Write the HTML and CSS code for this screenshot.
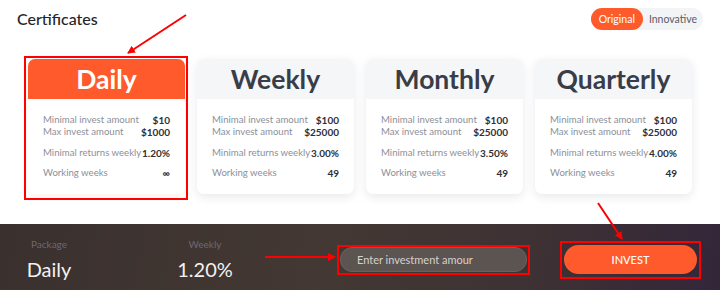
FILE: index.html
```html
<!DOCTYPE html>
<html>
<head>
<meta charset="utf-8">
<link rel="stylesheet" href="styles.css">
</head>
<body>
<div class="page">
  <div class="top">
    <h1 class="title">Certificates</h1>
    <div class="toggle">
      <span class="tab active">Original</span>
      <span class="tab">Innovative</span>
    </div>
  </div>
  <div class="cards">
    <div class="card selected">
      <div class="card-head">Daily</div>
      <div class="card-body">
        <div class="row"><span>Minimal invest amount</span><b>$10</b></div>
        <div class="row"><span>Max invest amount</span><b>$1000</b></div>
        <div class="row gap"><span>Minimal returns weekly</span><b>1.20%</b></div>
        <div class="row gap"><span>Working weeks</span><b>∞</b></div>
      </div>
    </div>
    <div class="card">
      <div class="card-head">Weekly</div>
      <div class="card-body">
        <div class="row"><span>Minimal invest amount</span><b>$100</b></div>
        <div class="row"><span>Max invest amount</span><b>$25000</b></div>
        <div class="row gap"><span>Minimal returns weekly</span><b>3.00%</b></div>
        <div class="row gap"><span>Working weeks</span><b>49</b></div>
      </div>
    </div>
    <div class="card">
      <div class="card-head">Monthly</div>
      <div class="card-body">
        <div class="row"><span>Minimal invest amount</span><b>$100</b></div>
        <div class="row"><span>Max invest amount</span><b>$25000</b></div>
        <div class="row gap"><span>Minimal returns weekly</span><b>3.50%</b></div>
        <div class="row gap"><span>Working weeks</span><b>49</b></div>
      </div>
    </div>
    <div class="card">
      <div class="card-head">Quarterly</div>
      <div class="card-body">
        <div class="row"><span>Minimal invest amount</span><b>$100</b></div>
        <div class="row"><span>Max invest amount</span><b>$25000</b></div>
        <div class="row gap"><span>Minimal returns weekly</span><b>4.00%</b></div>
        <div class="row gap"><span>Working weeks</span><b>49</b></div>
      </div>
    </div>
  </div>
  <div class="bar">
    <div class="stat stat-pkg">
      <div class="stat-label">Package</div>
      <div class="stat-value">Daily</div>
    </div>
    <div class="stat stat-week">
      <div class="stat-label">Weekly</div>
      <div class="stat-value">1.20%</div>
    </div>
    <input class="amount" type="text" placeholder="Enter investment amour">
    <button class="invest">INVEST</button>
  </div>
  <svg class="annot" width="720" height="290" viewBox="0 0 720 290">
    <defs>
      <marker id="ah" markerWidth="8" markerHeight="8" refX="7" refY="4" orient="auto" markerUnits="userSpaceOnUse">
        <path d="M0,0 L8,4 L0,8 Z" fill="#ff0000"/>
      </marker>
    </defs>
    <g fill="none" stroke="#ff0000" stroke-width="2">
      <rect x="25" y="57" width="162" height="142"/>
      <rect x="338" y="246" width="191" height="28"/>
      <rect x="561" y="242" width="139" height="36"/>
      <line x1="186" y1="15" x2="128" y2="53" marker-end="url(#ah)"/>
      <line x1="265" y1="257" x2="335" y2="257" marker-end="url(#ah)"/>
      <line x1="598" y1="203" x2="622" y2="239" marker-end="url(#ah)"/>
    </g>
  </svg>
</div>
</body>
</html>
```
FILE: styles.css
```css
* { box-sizing: border-box; }
html, body { margin: 0; padding: 0; background: #fff; }
body {
  width: 720px;
  height: 290px;
  overflow: hidden;
  font-family: Lato, "Noto Sans", Arial, sans-serif;
}
.page { position: relative; width: 720px; height: 290px; }

.top {
  display: flex;
  justify-content: space-between;
  align-items: flex-start;
  padding: 8px 17px 0 17px;
  height: 59px;
}
.title {
  margin: 1px 0 0 0;
  font-size: 16px;
  font-weight: 500;
  color: #23252b;
  line-height: 20px;
}
.toggle {
  display: flex;
  background: #f3f4f6;
  border-radius: 11px;
  height: 22px;
}
.tab {
  display: flex;
  align-items: center;
  height: 22px;
  padding: 0 6px 0 6px;
  font-size: 10.5px;
  color: #5a5d66;
  border-radius: 11px;
}
.tab.active {
  background: #ff5a2b;
  color: #fff;
  padding: 0 8px;
}

.cards {
  display: flex;
  gap: 12px;
  padding-left: 28px;
  height: 165px;
}
.card {
  width: 157px;
  height: 135px;
  background: #fff;
  border-radius: 7px;
  box-shadow: 0 3px 10px rgba(30, 40, 70, 0.10);
  overflow: hidden;
}
.card-head {
  height: 40px;
  background: #f5f6f8;
  color: #393d48;
  font-size: 26.5px;
  font-weight: 700;
  text-align: center;
  line-height: 41px;
}
.card.selected { box-shadow: 0 2px 8px rgba(255, 90, 43, 0.10); }
.card.selected .card-head {
  background: #ff5a2b;
  color: #fff;
}
.card-body { padding: 15px 15px 0 15px; }
.row {
  display: flex;
  justify-content: space-between;
  white-space: nowrap;
  font-size: 9.6px;
  line-height: 12px;
  color: #8c9099;
}
.row b { color: #2e3038; font-weight: 700; font-size: 10px; }
.row.gap { margin-top: 9px; }
.row.gap + .row.gap { margin-top: 8px; }

.bar {
  display: flex;
  align-items: center;
  height: 66px;
  padding-top: 5px;
  background: linear-gradient(100deg, #3a302e 0%, #433833 45%, #3e3134 75%, #33263a 100%);
}
.stat {
  width: 98px;
  text-align: center;
}
.stat-week { margin-left: 58px; }
.stat-label {
  font-size: 10px;
  line-height: 12px;
  color: #6d6872;
  margin-bottom: 7px;
}
.stat-value {
  font-size: 20px;
  line-height: 24px;
  color: #f2f0ef;
  font-weight: 400;
}
.amount {
  margin-left: 86px;
  width: 187px;
  height: 25px;
  border: 1px solid #6a625e;
  border-radius: 12px;
  background: #5c5451;
  padding: 0 16px;
  font-family: inherit;
  font-size: 11px;
  color: #ddd;
  outline: none;
}
.amount::placeholder { color: #d6d1cd; }
.invest {
  margin-left: 37px;
  width: 133px;
  height: 29px;
  border: none;
  border-radius: 15px;
  background: #ff5a2b;
  color: #fff;
  font-family: inherit;
  font-size: 11px;
  font-weight: 500;
}

.annot {
  position: absolute;
  left: 0;
  top: 0;
  pointer-events: none;
}
```
